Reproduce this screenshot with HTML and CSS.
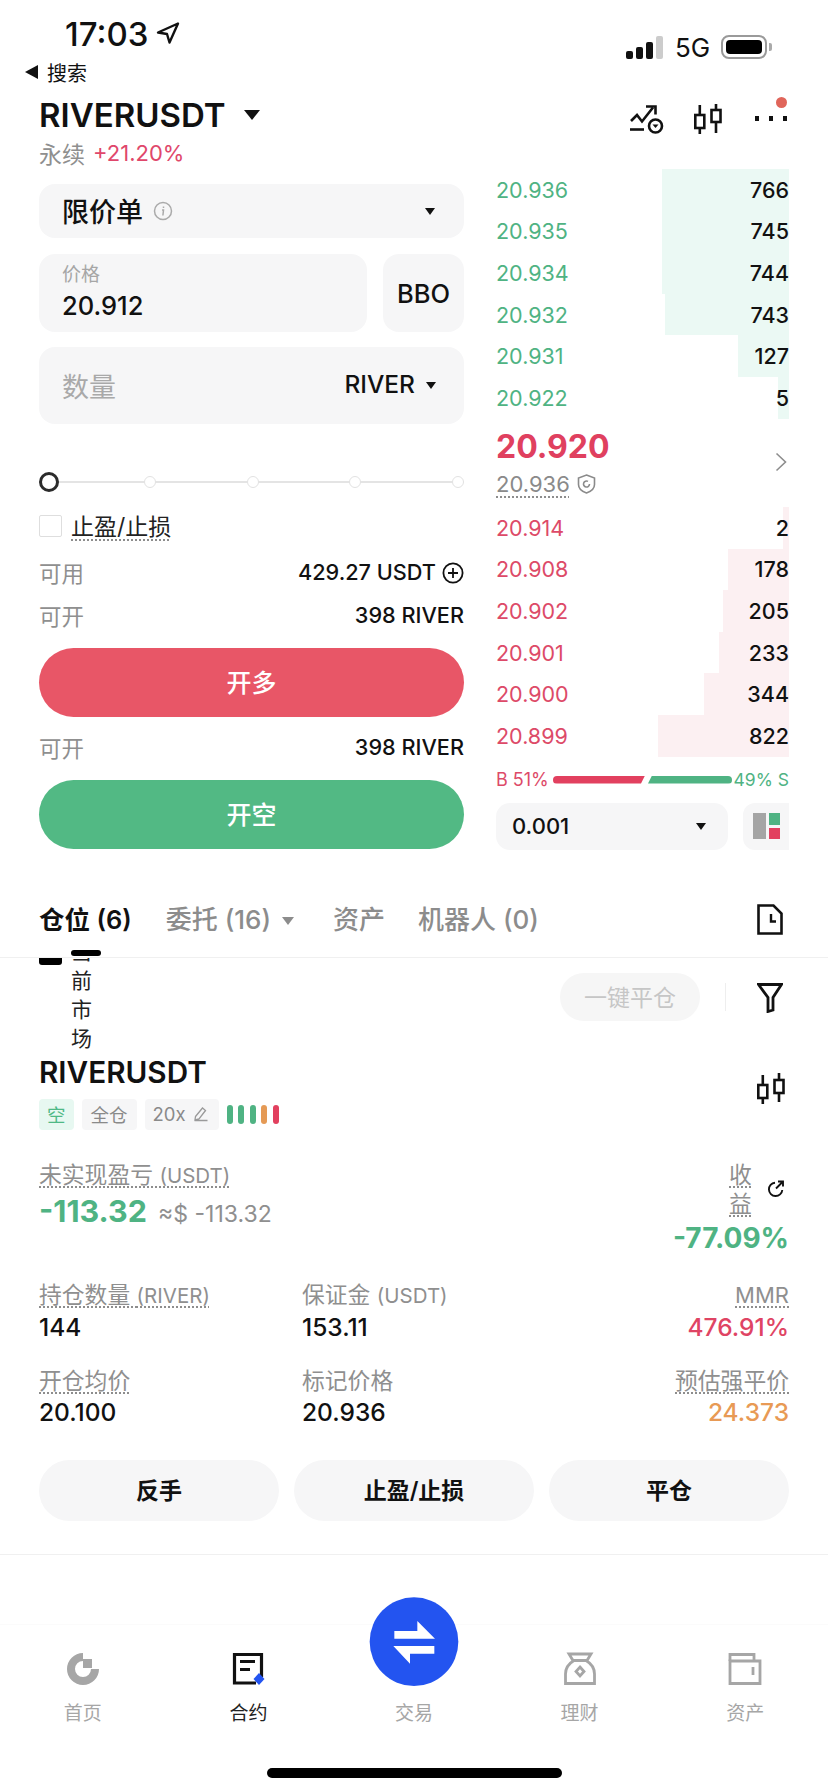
FILE: index.html
```html
<!DOCTYPE html>
<html lang="zh">
<head>
<meta charset="utf-8">
<title>RIVERUSDT</title>
<link rel="stylesheet" href="styles.css">
</head>
<body>
<div class="page">
  <div class="status">
    <div class="time"><span>17:03</span>
      <svg class="loc" viewBox="0 0 24 22" width="24" height="22"><path d="M22 1.500 2 10.500l9 1.500 2.500 8.500z" fill="none" stroke="#111" stroke-width="2.400" stroke-linejoin="round"/></svg>
    </div>
    <div class="sys">
      <div class="signal"><i class="s1"></i><i class="s2"></i><i class="s3"></i><i class="s4"></i></div>
      <span class="net">5G</span>
      <div class="battery"><i></i></div><b class="nub"></b>
    </div>
  </div>
  <div class="back"><i class="back-tri"></i><span>搜索</span></div>

  <div class="head">
    <div class="title"><span>RIVERUSDT</span><i class="caret caret-lg"></i></div>
    <div class="head-icons">
      <svg width="34" height="30" viewBox="0 0 34 30" fill="none" stroke="#111" stroke-width="2.600"><path d="M1 17 7 11l5 6.500L23 3.500"/><path d="M16 2.500h9.500v8"/><path d="M0 25.500h14"/><circle cx="25.500" cy="22" r="6.500"/><path d="M22.500 20.500h6l-3 3.500z" fill="#111" stroke="none"/></svg>
      <svg width="28" height="30" viewBox="0 0 28 30" fill="none" stroke="#111" stroke-width="2.600"><rect x="1.300" y="11" width="9" height="13"/><path d="M5.800 1v10M5.800 24v6"/><rect x="17.500" y="6" width="9" height="12"/><path d="M22 0v6M22 18v11"/></svg>
      <div class="more"><i></i><i></i><i></i><b></b></div>
    </div>
  </div>
  <div class="sub"><span class="perp">永续</span><span class="chg">+21.20%</span></div>

  <div class="trade">
    <div class="form">
      <div class="box type-box">
        <span class="type">限价单</span>
        <svg class="info" width="20" height="20" viewBox="0 0 20 20" fill="none"><circle cx="10" cy="10" r="8.500" stroke="#aaa" stroke-width="1.500"/><path d="M10.500 5.500v1.600M9 9h1.500l-.6 5.500" stroke="#aaa" stroke-width="1.500"/></svg>
        <i class="caret caret-end"></i>
      </div>
      <div class="price-row">
        <div class="box price-box"><span class="price-label">价格</span><span class="price-val">20.912</span></div>
        <div class="box bbo">BBO</div>
      </div>
      <div class="box qty-box">
        <span class="qty-label">数量</span>
        <span class="qty-unit">RIVER</span><i class="caret"></i>
      </div>
      <div class="slider"><i class="knob"></i><i class="dot"></i><i class="dot"></i><i class="dot"></i><i class="dot"></i></div>
      <div class="tp"><i class="check"></i><span class="dotted tp-text">止盈/止损</span></div>
      <div class="info-row first"><span>可用</span>
        <div class="avail"><b>429.27 USDT</b>
          <svg width="22" height="22" viewBox="0 0 22 22" fill="none" stroke="#111" stroke-width="1.800"><circle cx="11" cy="11" r="9.600"/><path d="M11 6v10M6 11h10"/></svg>
        </div>
      </div>
      <div class="info-row second"><span>可开</span><b>398 RIVER</b></div>
      <div class="cta buy">开多</div>
      <div class="info-row third"><span>可开</span><b>398 RIVER</b></div>
      <div class="cta sell">开空</div>
    </div>

    <div class="book">
      <div class="row ask"><span class="bar" style="width:127px"></span><span class="p">20.936</span><span class="q">766</span></div>
      <div class="row ask"><span class="bar" style="width:127px"></span><span class="p">20.935</span><span class="q">745</span></div>
      <div class="row ask"><span class="bar" style="width:127px"></span><span class="p">20.934</span><span class="q">744</span></div>
      <div class="row ask"><span class="bar" style="width:124px"></span><span class="p">20.932</span><span class="q">743</span></div>
      <div class="row ask"><span class="bar" style="width:51px"></span><span class="p">20.931</span><span class="q">127</span></div>
      <div class="row ask"><span class="bar" style="width:11px"></span><span class="p">20.922</span><span class="q">5</span></div>
      <div class="mid">
        <div class="mid-l">
          <div class="last">20.920</div>
          <div class="mark"><span class="dotted">20.936</span>
            <svg width="19" height="20" viewBox="0 0 19 20" fill="none" stroke="#8b8b8b" stroke-width="1.600"><path d="M9.500 1 17.500 4v6.500c0 4-3.500 7-8 8.500-4.500-1.500-8-4.500-8-8.500V4z"/><path d="M12.500 10a3 3 0 1 1-1.500-2.600"/></svg>
          </div>
        </div>
        <svg class="chev" width="12" height="20" viewBox="0 0 12 20" fill="none" stroke="#8d8d8d" stroke-width="1.600"><path d="m1.500 1.500 9 8.500-9 8.500"/></svg>
      </div>
      <div class="row bid"><span class="bar" style="width:6px"></span><span class="p">20.914</span><span class="q">2</span></div>
      <div class="row bid"><span class="bar" style="width:61px"></span><span class="p">20.908</span><span class="q">178</span></div>
      <div class="row bid"><span class="bar" style="width:66px"></span><span class="p">20.902</span><span class="q">205</span></div>
      <div class="row bid"><span class="bar" style="width:70px"></span><span class="p">20.901</span><span class="q">233</span></div>
      <div class="row bid"><span class="bar" style="width:85px"></span><span class="p">20.900</span><span class="q">344</span></div>
      <div class="row bid"><span class="bar" style="width:131px"></span><span class="p">20.899</span><span class="q">822</span></div>
      <div class="ratio">
        <span class="rb">B 51%</span>
        <i class="ratio-b"></i><i class="ratio-s"></i>
        <span class="rs">49% S</span>
      </div>
      <div class="book-foot">
        <div class="tick"><span>0.001</span><i class="caret"></i></div>
        <div class="layout"><i class="l-grey"></i><div class="l-col"><i class="l-green"></i><i class="l-red"></i></div></div>
      </div>
    </div>
  </div>

  <div class="tabs">
    <span class="tab on">仓位 (6)</span>
    <span class="tab t2">委托 (16)<i class="caret caret-grey"></i></span>
    <span class="tab t3">资产</span>
    <span class="tab t4">机器人 (0)</span>
    <svg class="tab-icon" width="26" height="31" viewBox="0 0 26 31" fill="none" stroke="#111" stroke-width="2.600"><path d="M1.500 1.500h15l8 8v20h-23z"/><path d="M14 10v7.500h5" stroke-width="2.400"/></svg>
  </div>

  <div class="toolbar">
    <i class="mark-a"></i><i class="mark-b"></i>
    <div class="market">当前市场</div>
    <div class="tool-right">
      <div class="closeall">一键平仓</div>
      <i class="tool-div"></i>
      <svg class="filter" width="26" height="30" viewBox="0 0 26 30" fill="none" stroke="#111" stroke-width="2.800" stroke-linejoin="miter"><path d="M1.500 1.500h23L16 14.500V27l-5 1.500v-14z"/></svg>
    </div>
  </div>

  <div class="pos-head">
    <div>
      <div class="pos-name">RIVERUSDT</div>
      <div class="tags">
        <span class="tag tag-g">空</span>
        <span class="tag">全仓</span>
        <span class="tag tag-lev">20x
          <svg width="16" height="16" viewBox="0 0 16 16" fill="none" stroke="#9a9a9a" stroke-width="1.300"><path d="M1.500 14.500h13M2.500 10.500l7-8.500 3 2.500-6.500 8.500-4 1z"/></svg>
        </span>
        <span class="risk"><i class="g"></i><i class="g"></i><i class="g"></i><i class="o"></i><i class="r"></i></span>
      </div>
    </div>
    <svg class="pos-candle" width="28" height="31" viewBox="0 0 28 31" fill="none" stroke="#111" stroke-width="2.600"><rect x="1.300" y="12" width="9" height="13"/><path d="M5.800 2v10M5.800 25v6"/><rect x="17.500" y="7" width="9" height="13"/><path d="M22 0v7M22 20v9"/></svg>
  </div>

  <div class="pnl">
    <div>
      <div class="lbl"><span class="dotted">未实现盈亏 <span class="lat">(USDT)</span></span></div>
      <div class="pnl-v"><b>-113.32</b><span>≈$ -113.32</span></div>
    </div>
    <div class="roe">
      <div class="roe-top">
        <span class="dotted roe-l">收益</span>
        <svg width="18" height="18" viewBox="0 0 18 18" fill="none" stroke="#111" stroke-width="1.900"><path d="M8 2.700A6.700 6.700 0 1 0 15.300 10"/><path d="M9 8.500 16 1.500M11 1.500h5v5"/></svg>
      </div>
      <div class="roe-v">-77.09%</div>
    </div>
  </div>

  <div class="stats">
    <div class="stat"><div class="lbl"><span class="dotted">持仓数量 <span class="lat">(RIVER)</span></span></div><div class="val">144</div></div>
    <div class="stat"><div class="lbl">保证金 <span class="lat">(USDT)</span></div><div class="val">153.11</div></div>
    <div class="stat right"><div class="lbl"><span class="dotted lat mmr">MMR</span></div><div class="val red">476.91%</div></div>
    <div class="stat"><div class="lbl"><span class="dotted">开仓均价</span></div><div class="val">20.100</div></div>
    <div class="stat"><div class="lbl">标记价格</div><div class="val">20.936</div></div>
    <div class="stat right"><div class="lbl"><span class="dotted">预估强平价</span></div><div class="val orange">24.373</div></div>
  </div>

  <div class="actions">
    <div class="act">反手</div><div class="act">止盈/止损</div><div class="act">平仓</div>
  </div>
  <div class="sep"></div>

  <nav class="nav">
    <div class="fab">
      <svg width="100" height="100" viewBox="0 0 300 300"><circle cx="147" cy="152" r="133" fill="#2354f0"/><path d="M88 120h69V90l53 53H88zM208 165v23h-73v30l-50-53z" fill="#fff"/></svg>
    </div>
    <div class="nav-item">
      <svg width="34" height="34" viewBox="0 0 34 34" fill="none"><path d="M17 5A12 12 0 1 0 29 17" stroke="#a6a6a6" stroke-width="8"/><rect x="17" y="7" width="9" height="9" fill="#a6a6a6"/></svg>
      <span>首页</span>
    </div>
    <div class="nav-item on">
      <svg width="34" height="34" viewBox="0 0 34 34" fill="none"><path d="M25 31H3.500V2.500h27V25" stroke="#111" stroke-width="3.200"/><path d="M9 9.500h15M9 17.500h10" stroke="#111" stroke-width="3.200"/><path d="m28 21 5.500 6-5.500 6-5.500-6z" fill="#2354f0"/></svg>
      <span>合约</span>
    </div>
    <div class="nav-item mid-item">
      <i class="spacer"></i>
      <span>交易</span>
    </div>
    <div class="nav-item">
      <svg width="34" height="34" viewBox="0 0 34 34" fill="none" stroke="#a6a6a6" stroke-width="2.800"><path d="M6 2h22l-4 6.500H10z"/><path d="M11 8.500C5 12 2.500 17 2.500 22v9.500h29V22c0-5-2.500-10-8.500-13.500"/><path d="m17 15 4 4.500-4 4.500-4-4.500z"/></svg>
      <span>理财</span>
    </div>
    <div class="nav-item">
      <svg width="34" height="34" viewBox="0 0 34 34" fill="none" stroke="#a6a6a6" stroke-width="2.800"><path d="M2 9V2.500h24V9"/><path d="M2 9h30v22.500H2z"/><path d="M25 15v8"/></svg>
      <span>资产</span>
    </div>
  </nav>
  <div class="home-bar"></div>
</div>
</body>
</html>
```

FILE: styles.css
```css
* { box-sizing: border-box; }
html, body { margin: 0; padding: 0; background: #fff; }
body {
  font-family: Inter, "Noto Sans CJK SC", sans-serif;
  color: #111;
}
i { display: block; font-style: normal; }
b { font-weight: 500; }
.page { width: 828px; height: 1792px; overflow: hidden; position: relative; }

/* status */
.status { height: 60px; display: flex; justify-content: space-between; padding: 0 56px 0 65px; }
.time { display: flex; align-items: center; gap: 8px; height: 36px; margin-top: 16px; font-size: 33px; font-weight: 500; }
.loc { margin-top: -2px; }
.sys { display: flex; align-items: center; height: 24px; margin-top: 35px; }
.signal { display: flex; align-items: flex-end; gap: 3px; height: 23px; width: 37px; }
.signal i { width: 7px; background: #111; border-radius: 2px; }
.s1 { height: 8px; } .s2 { height: 12px; } .s3 { height: 17px; }
.signal .s4 { height: 23px; background: #ccc; }
.net { font-size: 26px; margin-left: 12px; width: 46px; }
.battery { width: 46px; height: 24px; border: 2px solid #9a9a9a; border-radius: 8px; padding: 3px; }
.battery i { width: 100%; height: 100%; background: #000; border-radius: 4px; }
.nub { width: 3px; height: 8px; background: #aaa; border-radius: 0 2px 2px 0; margin-left: 2px; }

.back { height: 24px; display: flex; align-items: center; padding-left: 25px; gap: 9px; font-size: 20px; }
.back-tri { width: 0; height: 0; border-top: 7px solid transparent; border-bottom: 7px solid transparent; border-right: 13px solid #111; }

/* head */
.head { display: flex; justify-content: space-between; height: 55px; padding: 11px 41px 0 39px; }
.title { display: flex; align-items: center; height: 40px; font-size: 33px; font-weight: 600; gap: 18px; }
.head-icons { display: flex; align-items: flex-start; gap: 30px; margin-top: 9px; height: 30px; }
.more { position: relative; display: flex; gap: 10px; width: 35px; padding: 12px 0 0 3px; }
.more i { width: 5px; height: 5px; background: #111; }
.more b { position: absolute; right: 0; top: -7px; width: 11px; height: 11px; border-radius: 50%; background: #e0655a; }
.sub { height: 30px; display: flex; align-items: center; gap: 8px; padding-left: 39px; font-size: 23px; padding-bottom: 2px; }
.perp { color: #8f8f8f; }
.chg { color: #e0476b; font-size: 22px; }

.caret { width: 0; height: 0; border-left: 5.500px solid transparent; border-right: 5.500px solid transparent; border-top: 7px solid #111; flex: none; }
.caret-lg { border-left-width: 8px; border-right-width: 8px; border-top-width: 10px; }
.caret-grey { border-top-color: #8c8c8c; border-left-width: 6.500px; border-right-width: 6.500px; border-top-width: 8px; margin-left: 11px; display: inline-block; vertical-align: middle; }
.caret-end { margin-left: auto; }

/* trade */
.trade { display: flex; gap: 32px; padding: 0 39px; }
.form { width: 425px; padding-top: 15px; }
.book { width: 293px; }
.box { background: #f6f6f7; border-radius: 16px; }
.type-box { height: 54px; display: flex; align-items: center; padding: 0 29px 0 23px; gap: 10px; }
.type { font-size: 27px; font-weight: 500; padding-bottom: 2px; }
.price-row { display: flex; gap: 16px; margin-top: 16px; }
.price-box { width: 328px; height: 78px; padding: 9px 23px 0; display: flex; flex-direction: column; }
.price-label { font-size: 19px; line-height: 24px; color: #a6a6a6; }
.price-val { font-size: 25.500px; line-height: 34px; font-weight: 500; margin-top: 2px; }
.bbo { width: 81px; height: 78px; display: flex; align-items: center; justify-content: center; font-size: 25.500px; font-weight: 500; }
.qty-box { height: 77px; margin-top: 15px; display: flex; align-items: center; padding: 0 28px 0 23px; }
.qty-label { font-size: 27px; color: #a9a9a9; margin-right: auto; }
.qty-unit { font-size: 24.500px; font-weight: 500; margin-right: 11px; padding-bottom: 3px; }

.slider { height: 20px; margin-top: 48px; display: flex; justify-content: space-between; align-items: center; background: linear-gradient(#e4e4e4, #e4e4e4) center / 100% 2px no-repeat; }
.knob { width: 20px; height: 20px; border: 3.500px solid #2b2b2b; border-radius: 50%; background: #fff; margin-right: -6px; }
.dot { width: 12px; height: 12px; border: 1.500px solid #e2e2e2; border-radius: 50%; background: #fff; }

.tp { display: flex; align-items: center; gap: 9px; height: 22px; margin-top: 23px; margin-bottom: 1px; }
.check { width: 23px; height: 22px; border: 1.500px solid #dedede; border-radius: 2px; }
.dotted { text-decoration: underline dotted #8d8d8d 1.500px; text-underline-offset: 4px; }
.tp-text { font-size: 23px; color: #222; margin-top: -2px; }

.info-row { display: flex; justify-content: space-between; align-items: center; height: 30px; padding-bottom: 3px; font-size: 22.500px; color: #8f8f8f; }
.info-row b { color: #111; font-size: 21.700px; }
.info-row.first { margin-top: 21px; }
.info-row.second { margin-top: 13px; }
.info-row.third { margin-top: 16px; }
.avail { display: flex; align-items: center; gap: 6px; }
.avail svg { margin-top: 2px; }
.cta { height: 69px; border-radius: 35px; margin-top: 17px; padding-bottom: 3px; display: flex; align-items: center; justify-content: center; color: #fff; font-size: 25px; font-weight: 500; }
.buy { background: #e85667; }
.sell { background: #52b984; }

/* book */
.row { position: relative; height: 41.600px; display: flex; align-items: center; justify-content: space-between; font-size: 21.500px; }
.row .p, .row .q { position: relative; }
.row .q { color: #111; font-weight: 450; }
.bar { position: absolute; right: 0; top: 0; bottom: 0; }
.ask .p { color: #4fb383; }
.ask .bar { background: #ebf9f4; }
.bid .p { color: #dd4a68; }
.bid .bar { background: #fcf0f2; }
.mid { height: 89px; display: flex; justify-content: space-between; align-items: center; margin-top: -0.600px; }
.mid-l { padding-bottom: 3px; }
.last { color: #e0405f; font-size: 32px; font-weight: 700; line-height: 40px; margin-top: 5px; }
.mark { display: flex; align-items: center; gap: 7px; font-size: 22px; color: #8a8a8a; margin-top: 2px; line-height: 30px; }
.chev { margin-right: 2px; }
.ratio { display: flex; align-items: center; height: 22px; margin-top: 12px; font-size: 18px; }
.rb { color: #dd4a68; width: 57px; }
.rs { color: #4fb383; margin-left: auto; font-size: 17.500px; }
.ratio-b { width: 92px; height: 8px; background: #e2405f; border-radius: 4px 0 0 4px; clip-path: polygon(0 0, 100% 0, calc(100% - 4px) 100%, 0 100%); }
.ratio-s { width: 84px; height: 8px; margin-left: 3px; background: #4fb383; border-radius: 0 4px 4px 0; clip-path: polygon(4px 0, 100% 0, 100% 100%, 0 100%); }
.book-foot { display: flex; gap: 15px; margin-top: 12px; }
.tick { width: 232px; height: 47px; background: #f6f6f7; border-radius: 14px; display: flex; align-items: center; justify-content: space-between; padding: 0 22px 0 16px; font-size: 22px; font-weight: 450; }
.layout { width: 46px; height: 47px; background: #f6f6f7; border-radius: 12px 0 0 12px; display: flex; gap: 3px; padding: 10px 0 0 10px; }
.l-grey { width: 13px; height: 26px; background: #a5a5a5; }
.l-col { display: flex; flex-direction: column; gap: 3px; }
.l-green { width: 11px; height: 12px; background: #4fb383; }
.l-red { width: 11px; height: 11px; background: #e2405f; }

/* tabs */
.tabs { position: relative; z-index: 2; height: 108px; padding: 50px 45px 0 39px; background: #fff; border-bottom: 1px solid #f0f0f0; display: flex; align-items: flex-start; font-size: 26px; color: #8c8c8c; }
.tab { line-height: 40px; font-weight: 500; white-space: nowrap; }
.tab.on { color: #111; font-weight: 600; font-size: 25.500px; }
.t2 { margin-left: 34px; }
.t3 { margin-left: 39px; }
.t4 { margin-left: 33px; }
.tab-icon { margin-left: auto; margin-top: 4px; }

/* toolbar */
.toolbar { position: relative; display: flex; justify-content: space-between; height: 97px; padding: 0 45px 0 71px; }
.mark-a { position: absolute; z-index: 3; left: 71px; top: -8px; width: 30px; height: 6px; background: #000; border-radius: 3px; }
.mark-b { position: absolute; z-index: 3; left: 39px; top: 0; width: 23px; height: 7px; background: #000; border-radius: 0 0 3px 3px; }
.market { width: 22px; margin-top: -21px; font-size: 21px; line-height: 29px; word-break: break-all; color: #222; }
.tool-right { display: flex; align-items: flex-start; }
.closeall { width: 140px; height: 48px; margin-top: 15px; border-radius: 24px; background: #f6f6f6; color: #c6c6c6; font-size: 23px; display: flex; align-items: center; justify-content: center; padding-bottom: 2px; }
.tool-div { width: 1px; height: 28px; margin: 25px 31px 0 25px; background: #eee; }
.filter { margin-top: 25px; }

/* position */
.pos-head { display: flex; justify-content: space-between; align-items: center; padding: 0 43px 0 39px; }
.pos-name { font-size: 29.700px; line-height: 34px; font-weight: 600; }
.pos-candle { margin-bottom: 8px; }
.tags { display: flex; align-items: center; gap: 8px; margin-top: 10px; height: 31px; }
.tag { height: 31px; display: flex; align-items: center; gap: 7px; padding: 0 9px; border-radius: 4px; background: #f6f6f7; color: #8a8a8a; font-size: 18.500px; }
.tag-g { background: #e7f8f1; color: #4fb986; padding: 0 8px; }
.tag-lev { width: 74px; padding: 0 8px; }
.risk { display: flex; gap: 5.500px; }
.risk i { width: 6px; height: 19px; border-radius: 3px; }
.risk .g { background: #4fb383; }
.risk .o { background: #e59a55; }
.risk .r { background: #e2405f; }

.lbl { font-size: 22.800px; line-height: 29px; color: #8f8f8f; white-space: nowrap; }
.lat { font-size: 20.500px; }
.mmr { font-size: 22px; }
.pnl { display: flex; justify-content: space-between; align-items: flex-start; margin-top: 30px; padding: 0 39px; }
.pnl-v { display: flex; align-items: baseline; gap: 11px; line-height: 38px; margin-top: 2px; }
.pnl-v b { font-size: 30.500px; font-weight: 700; color: #4fb383; }
.pnl-v span { font-size: 23px; color: #8f8f8f; }
.roe { text-align: right; }
.roe-top { display: flex; justify-content: flex-end; align-items: center; gap: 15px; padding-right: 4px; }
.roe-l { width: 23px; font-size: 22.800px; line-height: 29px; color: #8f8f8f; word-break: break-all; text-align: center; }
.roe-v { font-size: 28px; font-weight: 700; color: #4fb383; line-height: 34px; margin-top: 3px; }
.stats { display: grid; grid-template-columns: 263px 1fr auto; row-gap: 22px; padding: 0 39px; margin-top: 25px; }
.stat.right { text-align: right; }
.val { font-size: 24.500px; line-height: 34px; font-weight: 500; }
.val.red { color: #df4464; }
.val.orange { color: #e89a55; }
.actions { display: flex; gap: 15px; padding: 0 39px; margin-top: 31px; }
.act { flex: 1; height: 61px; border-radius: 31px; background: #f6f6f7; display: flex; align-items: center; justify-content: center; font-size: 23px; font-weight: 600; padding-bottom: 2px; }
.sep { height: 1px; background: #f0f0f0; margin-top: 33px; }

/* nav */
.nav { position: relative; display: grid; grid-template-columns: repeat(5, 1fr); margin-top: 69px; padding-top: 27px; border-top: 1px solid #fbfbfb; }
.nav-item { display: flex; flex-direction: column; align-items: center; font-size: 19px; line-height: 28px; color: #a6a6a6; }
.nav-item.on { color: #222; }
.nav-item span { margin-top: 14px; }
.spacer { height: 34px; }
.fab { position: absolute; left: 365px; top: -34px; width: 100px; height: 100px; }
.home-bar { width: 295px; height: 10px; background: #000; border-radius: 5px; margin: 40px auto 0; }
```
